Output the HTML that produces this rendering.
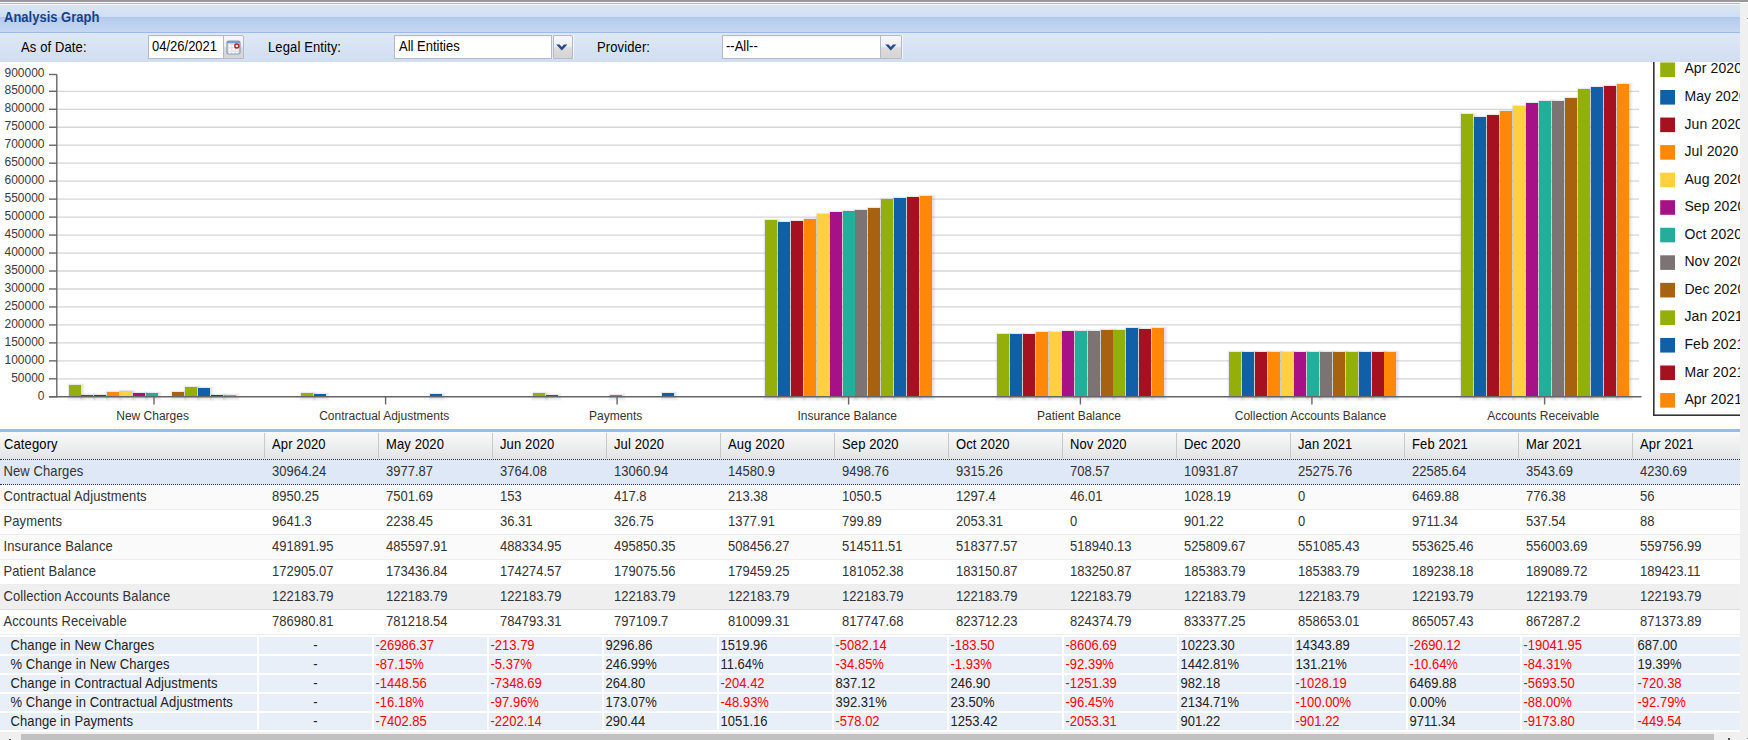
<!DOCTYPE html>
<html><head><meta charset="utf-8">
<style>
html,body{margin:0;padding:0;}
body{width:1748px;height:740px;overflow:hidden;position:relative;background:#fff;font-family:"Liberation Sans",sans-serif;}
.lbl{position:absolute;letter-spacing:0.12px;font-size:13px;line-height:29px;color:#000;white-space:nowrap;transform:scaleY(1.09);transform-origin:0 19px}
.inp{position:absolute;height:24px;box-sizing:border-box;background:#fff;border:1px solid #b5b8c8;font-size:13px;color:#000;white-space:nowrap;overflow:hidden;background-image:linear-gradient(#f3f3f3,#fff 3px)}
.trig{position:absolute;height:24px;box-sizing:border-box;border:1px solid #b5b8c8;border-radius:0 2px 0 0;background:linear-gradient(#f7f7f7 0%,#f0f0f0 45%,#dcdcdc 55%,#d4d4d4 100%)}
.gh{background:linear-gradient(#f9f9f9,#e3e4e6)}
.ht{position:absolute;letter-spacing:0.12px;font-size:13px;line-height:26px;color:#000;white-space:nowrap;transform:scaleY(1.09);transform-origin:0 17.5px}
.ct{position:absolute;font-size:13px;line-height:26px;color:#333;white-space:nowrap;transform:scaleY(1.09);transform-origin:0 17.5px}
.sc{position:absolute;height:17px;background:#e9eff8;font-size:13px;line-height:17px;color:#222;white-space:nowrap}
.t{display:inline-block;transform:scaleY(1.09);transform-origin:0 13px}
</style></head><body>
<svg width="1740" height="430" viewBox="0 0 1740 430" style="position:absolute;left:0;top:0">
<defs><filter id="sh" x="-20%" y="-5%" width="140%" height="110%"><feGaussianBlur in="SourceAlpha" stdDeviation="1"/><feOffset dx="1" dy="1"/><feComponentTransfer><feFuncA type="linear" slope="0.12"/></feComponentTransfer><feMerge><feMergeNode/><feMergeNode in="SourceGraphic"/></feMerge></filter></defs>
<line x1="57" y1="378.83" x2="1639" y2="378.83" stroke="#d6d6d6" stroke-width="1.3"/>
<line x1="57" y1="360.86" x2="1639" y2="360.86" stroke="#d6d6d6" stroke-width="1.3"/>
<line x1="57" y1="342.89" x2="1639" y2="342.89" stroke="#d6d6d6" stroke-width="1.3"/>
<line x1="57" y1="324.92" x2="1639" y2="324.92" stroke="#d6d6d6" stroke-width="1.3"/>
<line x1="57" y1="306.95" x2="1639" y2="306.95" stroke="#d6d6d6" stroke-width="1.3"/>
<line x1="57" y1="288.98" x2="1639" y2="288.98" stroke="#d6d6d6" stroke-width="1.3"/>
<line x1="57" y1="271.01" x2="1639" y2="271.01" stroke="#d6d6d6" stroke-width="1.3"/>
<line x1="57" y1="253.04" x2="1639" y2="253.04" stroke="#d6d6d6" stroke-width="1.3"/>
<line x1="57" y1="235.07" x2="1639" y2="235.07" stroke="#d6d6d6" stroke-width="1.3"/>
<line x1="57" y1="217.10" x2="1639" y2="217.10" stroke="#d6d6d6" stroke-width="1.3"/>
<line x1="57" y1="199.13" x2="1639" y2="199.13" stroke="#d6d6d6" stroke-width="1.3"/>
<line x1="57" y1="181.16" x2="1639" y2="181.16" stroke="#d6d6d6" stroke-width="1.3"/>
<line x1="57" y1="163.19" x2="1639" y2="163.19" stroke="#d6d6d6" stroke-width="1.3"/>
<line x1="57" y1="145.22" x2="1639" y2="145.22" stroke="#d6d6d6" stroke-width="1.3"/>
<line x1="57" y1="127.25" x2="1639" y2="127.25" stroke="#d6d6d6" stroke-width="1.3"/>
<line x1="57" y1="109.28" x2="1639" y2="109.28" stroke="#d6d6d6" stroke-width="1.3"/>
<line x1="57" y1="91.31" x2="1639" y2="91.31" stroke="#d6d6d6" stroke-width="1.3"/>
<line x1="49" y1="396.80" x2="57" y2="396.80" stroke="#666" stroke-width="1.4"/>
<text x="44.5" y="399.80" text-anchor="end" font-family="Liberation Sans" font-size="12" fill="#3a3a3a">0</text>
<line x1="49" y1="378.83" x2="57" y2="378.83" stroke="#666" stroke-width="1.4"/>
<text x="44.5" y="381.83" text-anchor="end" font-family="Liberation Sans" font-size="12" fill="#3a3a3a">50000</text>
<line x1="49" y1="360.86" x2="57" y2="360.86" stroke="#666" stroke-width="1.4"/>
<text x="44.5" y="363.86" text-anchor="end" font-family="Liberation Sans" font-size="12" fill="#3a3a3a">100000</text>
<line x1="49" y1="342.89" x2="57" y2="342.89" stroke="#666" stroke-width="1.4"/>
<text x="44.5" y="345.89" text-anchor="end" font-family="Liberation Sans" font-size="12" fill="#3a3a3a">150000</text>
<line x1="49" y1="324.92" x2="57" y2="324.92" stroke="#666" stroke-width="1.4"/>
<text x="44.5" y="327.92" text-anchor="end" font-family="Liberation Sans" font-size="12" fill="#3a3a3a">200000</text>
<line x1="49" y1="306.95" x2="57" y2="306.95" stroke="#666" stroke-width="1.4"/>
<text x="44.5" y="309.95" text-anchor="end" font-family="Liberation Sans" font-size="12" fill="#3a3a3a">250000</text>
<line x1="49" y1="288.98" x2="57" y2="288.98" stroke="#666" stroke-width="1.4"/>
<text x="44.5" y="291.98" text-anchor="end" font-family="Liberation Sans" font-size="12" fill="#3a3a3a">300000</text>
<line x1="49" y1="271.01" x2="57" y2="271.01" stroke="#666" stroke-width="1.4"/>
<text x="44.5" y="274.01" text-anchor="end" font-family="Liberation Sans" font-size="12" fill="#3a3a3a">350000</text>
<line x1="49" y1="253.04" x2="57" y2="253.04" stroke="#666" stroke-width="1.4"/>
<text x="44.5" y="256.04" text-anchor="end" font-family="Liberation Sans" font-size="12" fill="#3a3a3a">400000</text>
<line x1="49" y1="235.07" x2="57" y2="235.07" stroke="#666" stroke-width="1.4"/>
<text x="44.5" y="238.07" text-anchor="end" font-family="Liberation Sans" font-size="12" fill="#3a3a3a">450000</text>
<line x1="49" y1="217.10" x2="57" y2="217.10" stroke="#666" stroke-width="1.4"/>
<text x="44.5" y="220.10" text-anchor="end" font-family="Liberation Sans" font-size="12" fill="#3a3a3a">500000</text>
<line x1="49" y1="199.13" x2="57" y2="199.13" stroke="#666" stroke-width="1.4"/>
<text x="44.5" y="202.13" text-anchor="end" font-family="Liberation Sans" font-size="12" fill="#3a3a3a">550000</text>
<line x1="49" y1="181.16" x2="57" y2="181.16" stroke="#666" stroke-width="1.4"/>
<text x="44.5" y="184.16" text-anchor="end" font-family="Liberation Sans" font-size="12" fill="#3a3a3a">600000</text>
<line x1="49" y1="163.19" x2="57" y2="163.19" stroke="#666" stroke-width="1.4"/>
<text x="44.5" y="166.19" text-anchor="end" font-family="Liberation Sans" font-size="12" fill="#3a3a3a">650000</text>
<line x1="49" y1="145.22" x2="57" y2="145.22" stroke="#666" stroke-width="1.4"/>
<text x="44.5" y="148.22" text-anchor="end" font-family="Liberation Sans" font-size="12" fill="#3a3a3a">700000</text>
<line x1="49" y1="127.25" x2="57" y2="127.25" stroke="#666" stroke-width="1.4"/>
<text x="44.5" y="130.25" text-anchor="end" font-family="Liberation Sans" font-size="12" fill="#3a3a3a">750000</text>
<line x1="49" y1="109.28" x2="57" y2="109.28" stroke="#666" stroke-width="1.4"/>
<text x="44.5" y="112.28" text-anchor="end" font-family="Liberation Sans" font-size="12" fill="#3a3a3a">800000</text>
<line x1="49" y1="91.31" x2="57" y2="91.31" stroke="#666" stroke-width="1.4"/>
<text x="44.5" y="94.31" text-anchor="end" font-family="Liberation Sans" font-size="12" fill="#3a3a3a">850000</text>
<line x1="49" y1="74.50" x2="57" y2="74.50" stroke="#666" stroke-width="1.4"/>
<text x="44.5" y="76.50" text-anchor="end" font-family="Liberation Sans" font-size="12" fill="#3a3a3a">900000</text>
<g><rect x="70.20" y="386.20" width="12.0" height="11.80" fill="none" stroke="rgb(200,200,200)" stroke-width="6" stroke-opacity="0.10"/><rect x="69.90" y="385.90" width="12.0" height="11.80" fill="none" stroke="rgb(150,150,150)" stroke-width="4" stroke-opacity="0.10"/><rect x="69.60" y="385.60" width="12.0" height="11.80" fill="none" stroke="rgb(100,100,100)" stroke-width="2" stroke-opacity="0.10"/><rect x="82.20" y="396.20" width="12.0" height="1.80" fill="none" stroke="rgb(200,200,200)" stroke-width="6" stroke-opacity="0.10"/><rect x="81.90" y="395.90" width="12.0" height="1.80" fill="none" stroke="rgb(150,150,150)" stroke-width="4" stroke-opacity="0.10"/><rect x="81.60" y="395.60" width="12.0" height="1.80" fill="none" stroke="rgb(100,100,100)" stroke-width="2" stroke-opacity="0.10"/><rect x="95.20" y="396.20" width="12.0" height="1.80" fill="none" stroke="rgb(200,200,200)" stroke-width="6" stroke-opacity="0.10"/><rect x="94.90" y="395.90" width="12.0" height="1.80" fill="none" stroke="rgb(150,150,150)" stroke-width="4" stroke-opacity="0.10"/><rect x="94.60" y="395.60" width="12.0" height="1.80" fill="none" stroke="rgb(100,100,100)" stroke-width="2" stroke-opacity="0.10"/><rect x="108.20" y="393.20" width="12.0" height="4.80" fill="none" stroke="rgb(200,200,200)" stroke-width="6" stroke-opacity="0.10"/><rect x="107.90" y="392.90" width="12.0" height="4.80" fill="none" stroke="rgb(150,150,150)" stroke-width="4" stroke-opacity="0.10"/><rect x="107.60" y="392.60" width="12.0" height="4.80" fill="none" stroke="rgb(100,100,100)" stroke-width="2" stroke-opacity="0.10"/><rect x="121.20" y="392.20" width="12.0" height="5.80" fill="none" stroke="rgb(200,200,200)" stroke-width="6" stroke-opacity="0.10"/><rect x="120.90" y="391.90" width="12.0" height="5.80" fill="none" stroke="rgb(150,150,150)" stroke-width="4" stroke-opacity="0.10"/><rect x="120.60" y="391.60" width="12.0" height="5.80" fill="none" stroke="rgb(100,100,100)" stroke-width="2" stroke-opacity="0.10"/><rect x="134.20" y="394.20" width="12.0" height="3.80" fill="none" stroke="rgb(200,200,200)" stroke-width="6" stroke-opacity="0.10"/><rect x="133.90" y="393.90" width="12.0" height="3.80" fill="none" stroke="rgb(150,150,150)" stroke-width="4" stroke-opacity="0.10"/><rect x="133.60" y="393.60" width="12.0" height="3.80" fill="none" stroke="rgb(100,100,100)" stroke-width="2" stroke-opacity="0.10"/><rect x="147.20" y="394.20" width="12.0" height="3.80" fill="none" stroke="rgb(200,200,200)" stroke-width="6" stroke-opacity="0.10"/><rect x="146.90" y="393.90" width="12.0" height="3.80" fill="none" stroke="rgb(150,150,150)" stroke-width="4" stroke-opacity="0.10"/><rect x="146.60" y="393.60" width="12.0" height="3.80" fill="none" stroke="rgb(100,100,100)" stroke-width="2" stroke-opacity="0.10"/><rect x="173.20" y="393.20" width="12.0" height="4.80" fill="none" stroke="rgb(200,200,200)" stroke-width="6" stroke-opacity="0.10"/><rect x="172.90" y="392.90" width="12.0" height="4.80" fill="none" stroke="rgb(150,150,150)" stroke-width="4" stroke-opacity="0.10"/><rect x="172.60" y="392.60" width="12.0" height="4.80" fill="none" stroke="rgb(100,100,100)" stroke-width="2" stroke-opacity="0.10"/><rect x="186.20" y="388.20" width="12.0" height="9.80" fill="none" stroke="rgb(200,200,200)" stroke-width="6" stroke-opacity="0.10"/><rect x="185.90" y="387.90" width="12.0" height="9.80" fill="none" stroke="rgb(150,150,150)" stroke-width="4" stroke-opacity="0.10"/><rect x="185.60" y="387.60" width="12.0" height="9.80" fill="none" stroke="rgb(100,100,100)" stroke-width="2" stroke-opacity="0.10"/><rect x="199.20" y="389.20" width="12.0" height="8.80" fill="none" stroke="rgb(200,200,200)" stroke-width="6" stroke-opacity="0.10"/><rect x="198.90" y="388.90" width="12.0" height="8.80" fill="none" stroke="rgb(150,150,150)" stroke-width="4" stroke-opacity="0.10"/><rect x="198.60" y="388.60" width="12.0" height="8.80" fill="none" stroke="rgb(100,100,100)" stroke-width="2" stroke-opacity="0.10"/><rect x="212.20" y="396.20" width="12.0" height="1.80" fill="none" stroke="rgb(200,200,200)" stroke-width="6" stroke-opacity="0.10"/><rect x="211.90" y="395.90" width="12.0" height="1.80" fill="none" stroke="rgb(150,150,150)" stroke-width="4" stroke-opacity="0.10"/><rect x="211.60" y="395.60" width="12.0" height="1.80" fill="none" stroke="rgb(100,100,100)" stroke-width="2" stroke-opacity="0.10"/><rect x="225.20" y="396.20" width="12.0" height="1.80" fill="none" stroke="rgb(200,200,200)" stroke-width="6" stroke-opacity="0.10"/><rect x="224.90" y="395.90" width="12.0" height="1.80" fill="none" stroke="rgb(150,150,150)" stroke-width="4" stroke-opacity="0.10"/><rect x="224.60" y="395.60" width="12.0" height="1.80" fill="none" stroke="rgb(100,100,100)" stroke-width="2" stroke-opacity="0.10"/></g>
<g><rect x="69.00" y="385.00" width="12.0" height="11.80" fill="#94ae0a"/><rect x="81.00" y="395.00" width="12.0" height="1.80" fill="#115fa6"/><rect x="94.00" y="395.00" width="12.0" height="1.80" fill="#a61120"/><rect x="107.00" y="392.00" width="12.0" height="4.80" fill="#ff8809"/><rect x="120.00" y="391.00" width="12.0" height="5.80" fill="#ffd13e"/><rect x="133.00" y="393.00" width="12.0" height="3.80" fill="#a61187"/><rect x="146.00" y="393.00" width="12.0" height="3.80" fill="#24ad9a"/><rect x="172.00" y="392.00" width="12.0" height="4.80" fill="#a66111"/><rect x="185.00" y="387.00" width="12.0" height="9.80" fill="#94ae0a"/><rect x="198.00" y="388.00" width="12.0" height="8.80" fill="#115fa6"/><rect x="211.00" y="395.00" width="12.0" height="1.80" fill="#a61120"/><rect x="224.00" y="395.00" width="12.0" height="1.80" fill="#ff8809"/></g>
<line x1="154.00" y1="396.8" x2="154.00" y2="404.5" stroke="#666" stroke-width="1.4"/>
<text x="152.60" y="420" text-anchor="middle" font-family="Liberation Sans" font-size="12" fill="#333">New Charges</text>
<g><rect x="302.20" y="394.20" width="12.0" height="3.80" fill="none" stroke="rgb(200,200,200)" stroke-width="6" stroke-opacity="0.10"/><rect x="301.90" y="393.90" width="12.0" height="3.80" fill="none" stroke="rgb(150,150,150)" stroke-width="4" stroke-opacity="0.10"/><rect x="301.60" y="393.60" width="12.0" height="3.80" fill="none" stroke="rgb(100,100,100)" stroke-width="2" stroke-opacity="0.10"/><rect x="315.20" y="395.20" width="12.0" height="2.80" fill="none" stroke="rgb(200,200,200)" stroke-width="6" stroke-opacity="0.10"/><rect x="314.90" y="394.90" width="12.0" height="2.80" fill="none" stroke="rgb(150,150,150)" stroke-width="4" stroke-opacity="0.10"/><rect x="314.60" y="394.60" width="12.0" height="2.80" fill="none" stroke="rgb(100,100,100)" stroke-width="2" stroke-opacity="0.10"/><rect x="431.20" y="395.20" width="12.0" height="2.80" fill="none" stroke="rgb(200,200,200)" stroke-width="6" stroke-opacity="0.10"/><rect x="430.90" y="394.90" width="12.0" height="2.80" fill="none" stroke="rgb(150,150,150)" stroke-width="4" stroke-opacity="0.10"/><rect x="430.60" y="394.60" width="12.0" height="2.80" fill="none" stroke="rgb(100,100,100)" stroke-width="2" stroke-opacity="0.10"/></g>
<g><rect x="301.00" y="393.00" width="12.0" height="3.80" fill="#94ae0a"/><rect x="314.00" y="394.00" width="12.0" height="2.80" fill="#115fa6"/><rect x="430.00" y="394.00" width="12.0" height="2.80" fill="#115fa6"/></g>
<line x1="385.60" y1="396.8" x2="385.60" y2="404.5" stroke="#666" stroke-width="1.4"/>
<text x="384.20" y="420" text-anchor="middle" font-family="Liberation Sans" font-size="12" fill="#333">Contractual Adjustments</text>
<g><rect x="534.20" y="394.20" width="12.0" height="3.80" fill="none" stroke="rgb(200,200,200)" stroke-width="6" stroke-opacity="0.10"/><rect x="533.90" y="393.90" width="12.0" height="3.80" fill="none" stroke="rgb(150,150,150)" stroke-width="4" stroke-opacity="0.10"/><rect x="533.60" y="393.60" width="12.0" height="3.80" fill="none" stroke="rgb(100,100,100)" stroke-width="2" stroke-opacity="0.10"/><rect x="547.20" y="396.20" width="12.0" height="1.80" fill="none" stroke="rgb(200,200,200)" stroke-width="6" stroke-opacity="0.10"/><rect x="546.90" y="395.90" width="12.0" height="1.80" fill="none" stroke="rgb(150,150,150)" stroke-width="4" stroke-opacity="0.10"/><rect x="546.60" y="395.60" width="12.0" height="1.80" fill="none" stroke="rgb(100,100,100)" stroke-width="2" stroke-opacity="0.10"/><rect x="611.20" y="396.20" width="12.0" height="1.80" fill="none" stroke="rgb(200,200,200)" stroke-width="6" stroke-opacity="0.10"/><rect x="610.90" y="395.90" width="12.0" height="1.80" fill="none" stroke="rgb(150,150,150)" stroke-width="4" stroke-opacity="0.10"/><rect x="610.60" y="395.60" width="12.0" height="1.80" fill="none" stroke="rgb(100,100,100)" stroke-width="2" stroke-opacity="0.10"/><rect x="663.20" y="394.20" width="12.0" height="3.80" fill="none" stroke="rgb(200,200,200)" stroke-width="6" stroke-opacity="0.10"/><rect x="662.90" y="393.90" width="12.0" height="3.80" fill="none" stroke="rgb(150,150,150)" stroke-width="4" stroke-opacity="0.10"/><rect x="662.60" y="393.60" width="12.0" height="3.80" fill="none" stroke="rgb(100,100,100)" stroke-width="2" stroke-opacity="0.10"/></g>
<g><rect x="533.00" y="393.00" width="12.0" height="3.80" fill="#94ae0a"/><rect x="546.00" y="395.00" width="12.0" height="1.80" fill="#115fa6"/><rect x="610.00" y="395.00" width="12.0" height="1.80" fill="#24ad9a"/><rect x="662.00" y="393.00" width="12.0" height="3.80" fill="#115fa6"/></g>
<line x1="617.10" y1="396.8" x2="617.10" y2="404.5" stroke="#666" stroke-width="1.4"/>
<text x="615.70" y="420" text-anchor="middle" font-family="Liberation Sans" font-size="12" fill="#333">Payments</text>
<g><rect x="766.20" y="221.20" width="12.0" height="176.80" fill="none" stroke="rgb(200,200,200)" stroke-width="6" stroke-opacity="0.10"/><rect x="765.90" y="220.90" width="12.0" height="176.80" fill="none" stroke="rgb(150,150,150)" stroke-width="4" stroke-opacity="0.10"/><rect x="765.60" y="220.60" width="12.0" height="176.80" fill="none" stroke="rgb(100,100,100)" stroke-width="2" stroke-opacity="0.10"/><rect x="779.20" y="223.20" width="12.0" height="174.80" fill="none" stroke="rgb(200,200,200)" stroke-width="6" stroke-opacity="0.10"/><rect x="778.90" y="222.90" width="12.0" height="174.80" fill="none" stroke="rgb(150,150,150)" stroke-width="4" stroke-opacity="0.10"/><rect x="778.60" y="222.60" width="12.0" height="174.80" fill="none" stroke="rgb(100,100,100)" stroke-width="2" stroke-opacity="0.10"/><rect x="792.20" y="222.20" width="12.0" height="175.80" fill="none" stroke="rgb(200,200,200)" stroke-width="6" stroke-opacity="0.10"/><rect x="791.90" y="221.90" width="12.0" height="175.80" fill="none" stroke="rgb(150,150,150)" stroke-width="4" stroke-opacity="0.10"/><rect x="791.60" y="221.60" width="12.0" height="175.80" fill="none" stroke="rgb(100,100,100)" stroke-width="2" stroke-opacity="0.10"/><rect x="805.20" y="220.20" width="12.0" height="177.80" fill="none" stroke="rgb(200,200,200)" stroke-width="6" stroke-opacity="0.10"/><rect x="804.90" y="219.90" width="12.0" height="177.80" fill="none" stroke="rgb(150,150,150)" stroke-width="4" stroke-opacity="0.10"/><rect x="804.60" y="219.60" width="12.0" height="177.80" fill="none" stroke="rgb(100,100,100)" stroke-width="2" stroke-opacity="0.10"/><rect x="818.20" y="215.20" width="12.0" height="182.80" fill="none" stroke="rgb(200,200,200)" stroke-width="6" stroke-opacity="0.10"/><rect x="817.90" y="214.90" width="12.0" height="182.80" fill="none" stroke="rgb(150,150,150)" stroke-width="4" stroke-opacity="0.10"/><rect x="817.60" y="214.60" width="12.0" height="182.80" fill="none" stroke="rgb(100,100,100)" stroke-width="2" stroke-opacity="0.10"/><rect x="831.20" y="213.20" width="12.0" height="184.80" fill="none" stroke="rgb(200,200,200)" stroke-width="6" stroke-opacity="0.10"/><rect x="830.90" y="212.90" width="12.0" height="184.80" fill="none" stroke="rgb(150,150,150)" stroke-width="4" stroke-opacity="0.10"/><rect x="830.60" y="212.60" width="12.0" height="184.80" fill="none" stroke="rgb(100,100,100)" stroke-width="2" stroke-opacity="0.10"/><rect x="844.20" y="212.20" width="12.0" height="185.80" fill="none" stroke="rgb(200,200,200)" stroke-width="6" stroke-opacity="0.10"/><rect x="843.90" y="211.90" width="12.0" height="185.80" fill="none" stroke="rgb(150,150,150)" stroke-width="4" stroke-opacity="0.10"/><rect x="843.60" y="211.60" width="12.0" height="185.80" fill="none" stroke="rgb(100,100,100)" stroke-width="2" stroke-opacity="0.10"/><rect x="856.20" y="211.20" width="12.0" height="186.80" fill="none" stroke="rgb(200,200,200)" stroke-width="6" stroke-opacity="0.10"/><rect x="855.90" y="210.90" width="12.0" height="186.80" fill="none" stroke="rgb(150,150,150)" stroke-width="4" stroke-opacity="0.10"/><rect x="855.60" y="210.60" width="12.0" height="186.80" fill="none" stroke="rgb(100,100,100)" stroke-width="2" stroke-opacity="0.10"/><rect x="869.20" y="209.20" width="12.0" height="188.80" fill="none" stroke="rgb(200,200,200)" stroke-width="6" stroke-opacity="0.10"/><rect x="868.90" y="208.90" width="12.0" height="188.80" fill="none" stroke="rgb(150,150,150)" stroke-width="4" stroke-opacity="0.10"/><rect x="868.60" y="208.60" width="12.0" height="188.80" fill="none" stroke="rgb(100,100,100)" stroke-width="2" stroke-opacity="0.10"/><rect x="882.20" y="200.20" width="12.0" height="197.80" fill="none" stroke="rgb(200,200,200)" stroke-width="6" stroke-opacity="0.10"/><rect x="881.90" y="199.90" width="12.0" height="197.80" fill="none" stroke="rgb(150,150,150)" stroke-width="4" stroke-opacity="0.10"/><rect x="881.60" y="199.60" width="12.0" height="197.80" fill="none" stroke="rgb(100,100,100)" stroke-width="2" stroke-opacity="0.10"/><rect x="895.20" y="199.20" width="12.0" height="198.80" fill="none" stroke="rgb(200,200,200)" stroke-width="6" stroke-opacity="0.10"/><rect x="894.90" y="198.90" width="12.0" height="198.80" fill="none" stroke="rgb(150,150,150)" stroke-width="4" stroke-opacity="0.10"/><rect x="894.60" y="198.60" width="12.0" height="198.80" fill="none" stroke="rgb(100,100,100)" stroke-width="2" stroke-opacity="0.10"/><rect x="908.20" y="198.20" width="12.0" height="199.80" fill="none" stroke="rgb(200,200,200)" stroke-width="6" stroke-opacity="0.10"/><rect x="907.90" y="197.90" width="12.0" height="199.80" fill="none" stroke="rgb(150,150,150)" stroke-width="4" stroke-opacity="0.10"/><rect x="907.60" y="197.60" width="12.0" height="199.80" fill="none" stroke="rgb(100,100,100)" stroke-width="2" stroke-opacity="0.10"/><rect x="921.20" y="197.20" width="12.0" height="200.80" fill="none" stroke="rgb(200,200,200)" stroke-width="6" stroke-opacity="0.10"/><rect x="920.90" y="196.90" width="12.0" height="200.80" fill="none" stroke="rgb(150,150,150)" stroke-width="4" stroke-opacity="0.10"/><rect x="920.60" y="196.60" width="12.0" height="200.80" fill="none" stroke="rgb(100,100,100)" stroke-width="2" stroke-opacity="0.10"/></g>
<g><rect x="765.00" y="220.00" width="12.0" height="176.80" fill="#94ae0a"/><rect x="778.00" y="222.00" width="12.0" height="174.80" fill="#115fa6"/><rect x="791.00" y="221.00" width="12.0" height="175.80" fill="#a61120"/><rect x="804.00" y="219.00" width="12.0" height="177.80" fill="#ff8809"/><rect x="817.00" y="214.00" width="12.0" height="182.80" fill="#ffd13e"/><rect x="830.00" y="212.00" width="12.0" height="184.80" fill="#a61187"/><rect x="843.00" y="211.00" width="12.0" height="185.80" fill="#24ad9a"/><rect x="855.00" y="210.00" width="12.0" height="186.80" fill="#7c7474"/><rect x="868.00" y="208.00" width="12.0" height="188.80" fill="#a66111"/><rect x="881.00" y="199.00" width="12.0" height="197.80" fill="#94ae0a"/><rect x="894.00" y="198.00" width="12.0" height="198.80" fill="#115fa6"/><rect x="907.00" y="197.00" width="12.0" height="199.80" fill="#a61120"/><rect x="920.00" y="196.00" width="12.0" height="200.80" fill="#ff8809"/></g>
<line x1="848.60" y1="396.8" x2="848.60" y2="404.5" stroke="#666" stroke-width="1.4"/>
<text x="847.20" y="420" text-anchor="middle" font-family="Liberation Sans" font-size="12" fill="#333">Insurance Balance</text>
<g><rect x="998.20" y="335.20" width="12.0" height="62.80" fill="none" stroke="rgb(200,200,200)" stroke-width="6" stroke-opacity="0.10"/><rect x="997.90" y="334.90" width="12.0" height="62.80" fill="none" stroke="rgb(150,150,150)" stroke-width="4" stroke-opacity="0.10"/><rect x="997.60" y="334.60" width="12.0" height="62.80" fill="none" stroke="rgb(100,100,100)" stroke-width="2" stroke-opacity="0.10"/><rect x="1011.20" y="335.20" width="12.0" height="62.80" fill="none" stroke="rgb(200,200,200)" stroke-width="6" stroke-opacity="0.10"/><rect x="1010.90" y="334.90" width="12.0" height="62.80" fill="none" stroke="rgb(150,150,150)" stroke-width="4" stroke-opacity="0.10"/><rect x="1010.60" y="334.60" width="12.0" height="62.80" fill="none" stroke="rgb(100,100,100)" stroke-width="2" stroke-opacity="0.10"/><rect x="1024.20" y="335.20" width="12.0" height="62.80" fill="none" stroke="rgb(200,200,200)" stroke-width="6" stroke-opacity="0.10"/><rect x="1023.90" y="334.90" width="12.0" height="62.80" fill="none" stroke="rgb(150,150,150)" stroke-width="4" stroke-opacity="0.10"/><rect x="1023.60" y="334.60" width="12.0" height="62.80" fill="none" stroke="rgb(100,100,100)" stroke-width="2" stroke-opacity="0.10"/><rect x="1037.20" y="333.20" width="12.0" height="64.80" fill="none" stroke="rgb(200,200,200)" stroke-width="6" stroke-opacity="0.10"/><rect x="1036.90" y="332.90" width="12.0" height="64.80" fill="none" stroke="rgb(150,150,150)" stroke-width="4" stroke-opacity="0.10"/><rect x="1036.60" y="332.60" width="12.0" height="64.80" fill="none" stroke="rgb(100,100,100)" stroke-width="2" stroke-opacity="0.10"/><rect x="1050.20" y="333.20" width="12.0" height="64.80" fill="none" stroke="rgb(200,200,200)" stroke-width="6" stroke-opacity="0.10"/><rect x="1049.90" y="332.90" width="12.0" height="64.80" fill="none" stroke="rgb(150,150,150)" stroke-width="4" stroke-opacity="0.10"/><rect x="1049.60" y="332.60" width="12.0" height="64.80" fill="none" stroke="rgb(100,100,100)" stroke-width="2" stroke-opacity="0.10"/><rect x="1063.20" y="332.20" width="12.0" height="65.80" fill="none" stroke="rgb(200,200,200)" stroke-width="6" stroke-opacity="0.10"/><rect x="1062.90" y="331.90" width="12.0" height="65.80" fill="none" stroke="rgb(150,150,150)" stroke-width="4" stroke-opacity="0.10"/><rect x="1062.60" y="331.60" width="12.0" height="65.80" fill="none" stroke="rgb(100,100,100)" stroke-width="2" stroke-opacity="0.10"/><rect x="1076.20" y="332.20" width="12.0" height="65.80" fill="none" stroke="rgb(200,200,200)" stroke-width="6" stroke-opacity="0.10"/><rect x="1075.90" y="331.90" width="12.0" height="65.80" fill="none" stroke="rgb(150,150,150)" stroke-width="4" stroke-opacity="0.10"/><rect x="1075.60" y="331.60" width="12.0" height="65.80" fill="none" stroke="rgb(100,100,100)" stroke-width="2" stroke-opacity="0.10"/><rect x="1089.20" y="332.20" width="12.0" height="65.80" fill="none" stroke="rgb(200,200,200)" stroke-width="6" stroke-opacity="0.10"/><rect x="1088.90" y="331.90" width="12.0" height="65.80" fill="none" stroke="rgb(150,150,150)" stroke-width="4" stroke-opacity="0.10"/><rect x="1088.60" y="331.60" width="12.0" height="65.80" fill="none" stroke="rgb(100,100,100)" stroke-width="2" stroke-opacity="0.10"/><rect x="1102.20" y="331.20" width="12.0" height="66.80" fill="none" stroke="rgb(200,200,200)" stroke-width="6" stroke-opacity="0.10"/><rect x="1101.90" y="330.90" width="12.0" height="66.80" fill="none" stroke="rgb(150,150,150)" stroke-width="4" stroke-opacity="0.10"/><rect x="1101.60" y="330.60" width="12.0" height="66.80" fill="none" stroke="rgb(100,100,100)" stroke-width="2" stroke-opacity="0.10"/><rect x="1114.20" y="331.20" width="12.0" height="66.80" fill="none" stroke="rgb(200,200,200)" stroke-width="6" stroke-opacity="0.10"/><rect x="1113.90" y="330.90" width="12.0" height="66.80" fill="none" stroke="rgb(150,150,150)" stroke-width="4" stroke-opacity="0.10"/><rect x="1113.60" y="330.60" width="12.0" height="66.80" fill="none" stroke="rgb(100,100,100)" stroke-width="2" stroke-opacity="0.10"/><rect x="1127.20" y="329.20" width="12.0" height="68.80" fill="none" stroke="rgb(200,200,200)" stroke-width="6" stroke-opacity="0.10"/><rect x="1126.90" y="328.90" width="12.0" height="68.80" fill="none" stroke="rgb(150,150,150)" stroke-width="4" stroke-opacity="0.10"/><rect x="1126.60" y="328.60" width="12.0" height="68.80" fill="none" stroke="rgb(100,100,100)" stroke-width="2" stroke-opacity="0.10"/><rect x="1140.20" y="330.20" width="12.0" height="67.80" fill="none" stroke="rgb(200,200,200)" stroke-width="6" stroke-opacity="0.10"/><rect x="1139.90" y="329.90" width="12.0" height="67.80" fill="none" stroke="rgb(150,150,150)" stroke-width="4" stroke-opacity="0.10"/><rect x="1139.60" y="329.60" width="12.0" height="67.80" fill="none" stroke="rgb(100,100,100)" stroke-width="2" stroke-opacity="0.10"/><rect x="1153.20" y="329.20" width="12.0" height="68.80" fill="none" stroke="rgb(200,200,200)" stroke-width="6" stroke-opacity="0.10"/><rect x="1152.90" y="328.90" width="12.0" height="68.80" fill="none" stroke="rgb(150,150,150)" stroke-width="4" stroke-opacity="0.10"/><rect x="1152.60" y="328.60" width="12.0" height="68.80" fill="none" stroke="rgb(100,100,100)" stroke-width="2" stroke-opacity="0.10"/></g>
<g><rect x="997.00" y="334.00" width="12.0" height="62.80" fill="#94ae0a"/><rect x="1010.00" y="334.00" width="12.0" height="62.80" fill="#115fa6"/><rect x="1023.00" y="334.00" width="12.0" height="62.80" fill="#a61120"/><rect x="1036.00" y="332.00" width="12.0" height="64.80" fill="#ff8809"/><rect x="1049.00" y="332.00" width="12.0" height="64.80" fill="#ffd13e"/><rect x="1062.00" y="331.00" width="12.0" height="65.80" fill="#a61187"/><rect x="1075.00" y="331.00" width="12.0" height="65.80" fill="#24ad9a"/><rect x="1088.00" y="331.00" width="12.0" height="65.80" fill="#7c7474"/><rect x="1101.00" y="330.00" width="12.0" height="66.80" fill="#a66111"/><rect x="1113.00" y="330.00" width="12.0" height="66.80" fill="#94ae0a"/><rect x="1126.00" y="328.00" width="12.0" height="68.80" fill="#115fa6"/><rect x="1139.00" y="329.00" width="12.0" height="67.80" fill="#a61120"/><rect x="1152.00" y="328.00" width="12.0" height="68.80" fill="#ff8809"/></g>
<line x1="1080.40" y1="396.8" x2="1080.40" y2="404.5" stroke="#666" stroke-width="1.4"/>
<text x="1079.00" y="420" text-anchor="middle" font-family="Liberation Sans" font-size="12" fill="#333">Patient Balance</text>
<g><rect x="1230.20" y="353.20" width="12.0" height="44.80" fill="none" stroke="rgb(200,200,200)" stroke-width="6" stroke-opacity="0.10"/><rect x="1229.90" y="352.90" width="12.0" height="44.80" fill="none" stroke="rgb(150,150,150)" stroke-width="4" stroke-opacity="0.10"/><rect x="1229.60" y="352.60" width="12.0" height="44.80" fill="none" stroke="rgb(100,100,100)" stroke-width="2" stroke-opacity="0.10"/><rect x="1243.20" y="353.20" width="12.0" height="44.80" fill="none" stroke="rgb(200,200,200)" stroke-width="6" stroke-opacity="0.10"/><rect x="1242.90" y="352.90" width="12.0" height="44.80" fill="none" stroke="rgb(150,150,150)" stroke-width="4" stroke-opacity="0.10"/><rect x="1242.60" y="352.60" width="12.0" height="44.80" fill="none" stroke="rgb(100,100,100)" stroke-width="2" stroke-opacity="0.10"/><rect x="1256.20" y="353.20" width="12.0" height="44.80" fill="none" stroke="rgb(200,200,200)" stroke-width="6" stroke-opacity="0.10"/><rect x="1255.90" y="352.90" width="12.0" height="44.80" fill="none" stroke="rgb(150,150,150)" stroke-width="4" stroke-opacity="0.10"/><rect x="1255.60" y="352.60" width="12.0" height="44.80" fill="none" stroke="rgb(100,100,100)" stroke-width="2" stroke-opacity="0.10"/><rect x="1269.20" y="353.20" width="12.0" height="44.80" fill="none" stroke="rgb(200,200,200)" stroke-width="6" stroke-opacity="0.10"/><rect x="1268.90" y="352.90" width="12.0" height="44.80" fill="none" stroke="rgb(150,150,150)" stroke-width="4" stroke-opacity="0.10"/><rect x="1268.60" y="352.60" width="12.0" height="44.80" fill="none" stroke="rgb(100,100,100)" stroke-width="2" stroke-opacity="0.10"/><rect x="1282.20" y="353.20" width="12.0" height="44.80" fill="none" stroke="rgb(200,200,200)" stroke-width="6" stroke-opacity="0.10"/><rect x="1281.90" y="352.90" width="12.0" height="44.80" fill="none" stroke="rgb(150,150,150)" stroke-width="4" stroke-opacity="0.10"/><rect x="1281.60" y="352.60" width="12.0" height="44.80" fill="none" stroke="rgb(100,100,100)" stroke-width="2" stroke-opacity="0.10"/><rect x="1295.20" y="353.20" width="12.0" height="44.80" fill="none" stroke="rgb(200,200,200)" stroke-width="6" stroke-opacity="0.10"/><rect x="1294.90" y="352.90" width="12.0" height="44.80" fill="none" stroke="rgb(150,150,150)" stroke-width="4" stroke-opacity="0.10"/><rect x="1294.60" y="352.60" width="12.0" height="44.80" fill="none" stroke="rgb(100,100,100)" stroke-width="2" stroke-opacity="0.10"/><rect x="1308.20" y="353.20" width="12.0" height="44.80" fill="none" stroke="rgb(200,200,200)" stroke-width="6" stroke-opacity="0.10"/><rect x="1307.90" y="352.90" width="12.0" height="44.80" fill="none" stroke="rgb(150,150,150)" stroke-width="4" stroke-opacity="0.10"/><rect x="1307.60" y="352.60" width="12.0" height="44.80" fill="none" stroke="rgb(100,100,100)" stroke-width="2" stroke-opacity="0.10"/><rect x="1321.20" y="353.20" width="12.0" height="44.80" fill="none" stroke="rgb(200,200,200)" stroke-width="6" stroke-opacity="0.10"/><rect x="1320.90" y="352.90" width="12.0" height="44.80" fill="none" stroke="rgb(150,150,150)" stroke-width="4" stroke-opacity="0.10"/><rect x="1320.60" y="352.60" width="12.0" height="44.80" fill="none" stroke="rgb(100,100,100)" stroke-width="2" stroke-opacity="0.10"/><rect x="1334.20" y="353.20" width="12.0" height="44.80" fill="none" stroke="rgb(200,200,200)" stroke-width="6" stroke-opacity="0.10"/><rect x="1333.90" y="352.90" width="12.0" height="44.80" fill="none" stroke="rgb(150,150,150)" stroke-width="4" stroke-opacity="0.10"/><rect x="1333.60" y="352.60" width="12.0" height="44.80" fill="none" stroke="rgb(100,100,100)" stroke-width="2" stroke-opacity="0.10"/><rect x="1347.20" y="353.20" width="12.0" height="44.80" fill="none" stroke="rgb(200,200,200)" stroke-width="6" stroke-opacity="0.10"/><rect x="1346.90" y="352.90" width="12.0" height="44.80" fill="none" stroke="rgb(150,150,150)" stroke-width="4" stroke-opacity="0.10"/><rect x="1346.60" y="352.60" width="12.0" height="44.80" fill="none" stroke="rgb(100,100,100)" stroke-width="2" stroke-opacity="0.10"/><rect x="1360.20" y="353.20" width="12.0" height="44.80" fill="none" stroke="rgb(200,200,200)" stroke-width="6" stroke-opacity="0.10"/><rect x="1359.90" y="352.90" width="12.0" height="44.80" fill="none" stroke="rgb(150,150,150)" stroke-width="4" stroke-opacity="0.10"/><rect x="1359.60" y="352.60" width="12.0" height="44.80" fill="none" stroke="rgb(100,100,100)" stroke-width="2" stroke-opacity="0.10"/><rect x="1373.20" y="353.20" width="12.0" height="44.80" fill="none" stroke="rgb(200,200,200)" stroke-width="6" stroke-opacity="0.10"/><rect x="1372.90" y="352.90" width="12.0" height="44.80" fill="none" stroke="rgb(150,150,150)" stroke-width="4" stroke-opacity="0.10"/><rect x="1372.60" y="352.60" width="12.0" height="44.80" fill="none" stroke="rgb(100,100,100)" stroke-width="2" stroke-opacity="0.10"/><rect x="1385.20" y="353.20" width="12.0" height="44.80" fill="none" stroke="rgb(200,200,200)" stroke-width="6" stroke-opacity="0.10"/><rect x="1384.90" y="352.90" width="12.0" height="44.80" fill="none" stroke="rgb(150,150,150)" stroke-width="4" stroke-opacity="0.10"/><rect x="1384.60" y="352.60" width="12.0" height="44.80" fill="none" stroke="rgb(100,100,100)" stroke-width="2" stroke-opacity="0.10"/></g>
<g><rect x="1229.00" y="352.00" width="12.0" height="44.80" fill="#94ae0a"/><rect x="1242.00" y="352.00" width="12.0" height="44.80" fill="#115fa6"/><rect x="1255.00" y="352.00" width="12.0" height="44.80" fill="#a61120"/><rect x="1268.00" y="352.00" width="12.0" height="44.80" fill="#ff8809"/><rect x="1281.00" y="352.00" width="12.0" height="44.80" fill="#ffd13e"/><rect x="1294.00" y="352.00" width="12.0" height="44.80" fill="#a61187"/><rect x="1307.00" y="352.00" width="12.0" height="44.80" fill="#24ad9a"/><rect x="1320.00" y="352.00" width="12.0" height="44.80" fill="#7c7474"/><rect x="1333.00" y="352.00" width="12.0" height="44.80" fill="#a66111"/><rect x="1346.00" y="352.00" width="12.0" height="44.80" fill="#94ae0a"/><rect x="1359.00" y="352.00" width="12.0" height="44.80" fill="#115fa6"/><rect x="1372.00" y="352.00" width="12.0" height="44.80" fill="#a61120"/><rect x="1384.00" y="352.00" width="12.0" height="44.80" fill="#ff8809"/></g>
<line x1="1311.90" y1="396.8" x2="1311.90" y2="404.5" stroke="#666" stroke-width="1.4"/>
<text x="1310.50" y="420" text-anchor="middle" font-family="Liberation Sans" font-size="12" fill="#333">Collection Accounts Balance</text>
<g><rect x="1462.20" y="115.20" width="12.0" height="282.80" fill="none" stroke="rgb(200,200,200)" stroke-width="6" stroke-opacity="0.10"/><rect x="1461.90" y="114.90" width="12.0" height="282.80" fill="none" stroke="rgb(150,150,150)" stroke-width="4" stroke-opacity="0.10"/><rect x="1461.60" y="114.60" width="12.0" height="282.80" fill="none" stroke="rgb(100,100,100)" stroke-width="2" stroke-opacity="0.10"/><rect x="1475.20" y="118.20" width="12.0" height="279.80" fill="none" stroke="rgb(200,200,200)" stroke-width="6" stroke-opacity="0.10"/><rect x="1474.90" y="117.90" width="12.0" height="279.80" fill="none" stroke="rgb(150,150,150)" stroke-width="4" stroke-opacity="0.10"/><rect x="1474.60" y="117.60" width="12.0" height="279.80" fill="none" stroke="rgb(100,100,100)" stroke-width="2" stroke-opacity="0.10"/><rect x="1488.20" y="116.20" width="12.0" height="281.80" fill="none" stroke="rgb(200,200,200)" stroke-width="6" stroke-opacity="0.10"/><rect x="1487.90" y="115.90" width="12.0" height="281.80" fill="none" stroke="rgb(150,150,150)" stroke-width="4" stroke-opacity="0.10"/><rect x="1487.60" y="115.60" width="12.0" height="281.80" fill="none" stroke="rgb(100,100,100)" stroke-width="2" stroke-opacity="0.10"/><rect x="1501.20" y="112.20" width="12.0" height="285.80" fill="none" stroke="rgb(200,200,200)" stroke-width="6" stroke-opacity="0.10"/><rect x="1500.90" y="111.90" width="12.0" height="285.80" fill="none" stroke="rgb(150,150,150)" stroke-width="4" stroke-opacity="0.10"/><rect x="1500.60" y="111.60" width="12.0" height="285.80" fill="none" stroke="rgb(100,100,100)" stroke-width="2" stroke-opacity="0.10"/><rect x="1514.20" y="107.20" width="12.0" height="290.80" fill="none" stroke="rgb(200,200,200)" stroke-width="6" stroke-opacity="0.10"/><rect x="1513.90" y="106.90" width="12.0" height="290.80" fill="none" stroke="rgb(150,150,150)" stroke-width="4" stroke-opacity="0.10"/><rect x="1513.60" y="106.60" width="12.0" height="290.80" fill="none" stroke="rgb(100,100,100)" stroke-width="2" stroke-opacity="0.10"/><rect x="1527.20" y="104.20" width="12.0" height="293.80" fill="none" stroke="rgb(200,200,200)" stroke-width="6" stroke-opacity="0.10"/><rect x="1526.90" y="103.90" width="12.0" height="293.80" fill="none" stroke="rgb(150,150,150)" stroke-width="4" stroke-opacity="0.10"/><rect x="1526.60" y="103.60" width="12.0" height="293.80" fill="none" stroke="rgb(100,100,100)" stroke-width="2" stroke-opacity="0.10"/><rect x="1540.20" y="102.20" width="12.0" height="295.80" fill="none" stroke="rgb(200,200,200)" stroke-width="6" stroke-opacity="0.10"/><rect x="1539.90" y="101.90" width="12.0" height="295.80" fill="none" stroke="rgb(150,150,150)" stroke-width="4" stroke-opacity="0.10"/><rect x="1539.60" y="101.60" width="12.0" height="295.80" fill="none" stroke="rgb(100,100,100)" stroke-width="2" stroke-opacity="0.10"/><rect x="1553.20" y="102.20" width="12.0" height="295.80" fill="none" stroke="rgb(200,200,200)" stroke-width="6" stroke-opacity="0.10"/><rect x="1552.90" y="101.90" width="12.0" height="295.80" fill="none" stroke="rgb(150,150,150)" stroke-width="4" stroke-opacity="0.10"/><rect x="1552.60" y="101.60" width="12.0" height="295.80" fill="none" stroke="rgb(100,100,100)" stroke-width="2" stroke-opacity="0.10"/><rect x="1566.20" y="99.20" width="12.0" height="298.80" fill="none" stroke="rgb(200,200,200)" stroke-width="6" stroke-opacity="0.10"/><rect x="1565.90" y="98.90" width="12.0" height="298.80" fill="none" stroke="rgb(150,150,150)" stroke-width="4" stroke-opacity="0.10"/><rect x="1565.60" y="98.60" width="12.0" height="298.80" fill="none" stroke="rgb(100,100,100)" stroke-width="2" stroke-opacity="0.10"/><rect x="1579.20" y="90.20" width="12.0" height="307.80" fill="none" stroke="rgb(200,200,200)" stroke-width="6" stroke-opacity="0.10"/><rect x="1578.90" y="89.90" width="12.0" height="307.80" fill="none" stroke="rgb(150,150,150)" stroke-width="4" stroke-opacity="0.10"/><rect x="1578.60" y="89.60" width="12.0" height="307.80" fill="none" stroke="rgb(100,100,100)" stroke-width="2" stroke-opacity="0.10"/><rect x="1592.20" y="88.20" width="12.0" height="309.80" fill="none" stroke="rgb(200,200,200)" stroke-width="6" stroke-opacity="0.10"/><rect x="1591.90" y="87.90" width="12.0" height="309.80" fill="none" stroke="rgb(150,150,150)" stroke-width="4" stroke-opacity="0.10"/><rect x="1591.60" y="87.60" width="12.0" height="309.80" fill="none" stroke="rgb(100,100,100)" stroke-width="2" stroke-opacity="0.10"/><rect x="1605.20" y="87.20" width="12.0" height="310.80" fill="none" stroke="rgb(200,200,200)" stroke-width="6" stroke-opacity="0.10"/><rect x="1604.90" y="86.90" width="12.0" height="310.80" fill="none" stroke="rgb(150,150,150)" stroke-width="4" stroke-opacity="0.10"/><rect x="1604.60" y="86.60" width="12.0" height="310.80" fill="none" stroke="rgb(100,100,100)" stroke-width="2" stroke-opacity="0.10"/><rect x="1618.20" y="85.20" width="12.0" height="312.80" fill="none" stroke="rgb(200,200,200)" stroke-width="6" stroke-opacity="0.10"/><rect x="1617.90" y="84.90" width="12.0" height="312.80" fill="none" stroke="rgb(150,150,150)" stroke-width="4" stroke-opacity="0.10"/><rect x="1617.60" y="84.60" width="12.0" height="312.80" fill="none" stroke="rgb(100,100,100)" stroke-width="2" stroke-opacity="0.10"/></g>
<g><rect x="1461.00" y="114.00" width="12.0" height="282.80" fill="#94ae0a"/><rect x="1474.00" y="117.00" width="12.0" height="279.80" fill="#115fa6"/><rect x="1487.00" y="115.00" width="12.0" height="281.80" fill="#a61120"/><rect x="1500.00" y="111.00" width="12.0" height="285.80" fill="#ff8809"/><rect x="1513.00" y="106.00" width="12.0" height="290.80" fill="#ffd13e"/><rect x="1526.00" y="103.00" width="12.0" height="293.80" fill="#a61187"/><rect x="1539.00" y="101.00" width="12.0" height="295.80" fill="#24ad9a"/><rect x="1552.00" y="101.00" width="12.0" height="295.80" fill="#7c7474"/><rect x="1565.00" y="98.00" width="12.0" height="298.80" fill="#a66111"/><rect x="1578.00" y="89.00" width="12.0" height="307.80" fill="#94ae0a"/><rect x="1591.00" y="87.00" width="12.0" height="309.80" fill="#115fa6"/><rect x="1604.00" y="86.00" width="12.0" height="310.80" fill="#a61120"/><rect x="1617.00" y="84.00" width="12.0" height="312.80" fill="#ff8809"/></g>
<line x1="1544.60" y1="396.8" x2="1544.60" y2="404.5" stroke="#666" stroke-width="1.4"/>
<text x="1543.20" y="420" text-anchor="middle" font-family="Liberation Sans" font-size="12" fill="#333">Accounts Receivable</text>
<line x1="56.8" y1="74.5" x2="56.8" y2="397.55" stroke="#666" stroke-width="1.4"/>
<line x1="49" y1="396.8" x2="1641.5" y2="396.8" stroke="#666" stroke-width="1.4"/>
<rect x="1653.8" y="40" width="200" height="375.2" fill="#fff" stroke="#333" stroke-width="1.6"/>
<rect x="1660.2" y="62.45" width="14.8" height="14.6" fill="#94ae0a"/>
<text x="1684.4" y="73.45" font-family="Liberation Sans" font-size="14" fill="#111" letter-spacing="0.12">Apr 2020</text>
<rect x="1660.2" y="90.00" width="14.8" height="14.6" fill="#115fa6"/>
<text x="1684.4" y="101.00" font-family="Liberation Sans" font-size="14" fill="#111" letter-spacing="0.12">May 2020</text>
<rect x="1660.2" y="117.55" width="14.8" height="14.6" fill="#a61120"/>
<text x="1684.4" y="128.55" font-family="Liberation Sans" font-size="14" fill="#111" letter-spacing="0.12">Jun 2020</text>
<rect x="1660.2" y="145.10" width="14.8" height="14.6" fill="#ff8809"/>
<text x="1684.4" y="156.10" font-family="Liberation Sans" font-size="14" fill="#111" letter-spacing="0.12">Jul 2020</text>
<rect x="1660.2" y="172.65" width="14.8" height="14.6" fill="#ffd13e"/>
<text x="1684.4" y="183.65" font-family="Liberation Sans" font-size="14" fill="#111" letter-spacing="0.12">Aug 2020</text>
<rect x="1660.2" y="200.20" width="14.8" height="14.6" fill="#a61187"/>
<text x="1684.4" y="211.20" font-family="Liberation Sans" font-size="14" fill="#111" letter-spacing="0.12">Sep 2020</text>
<rect x="1660.2" y="227.75" width="14.8" height="14.6" fill="#24ad9a"/>
<text x="1684.4" y="238.75" font-family="Liberation Sans" font-size="14" fill="#111" letter-spacing="0.12">Oct 2020</text>
<rect x="1660.2" y="255.30" width="14.8" height="14.6" fill="#7c7474"/>
<text x="1684.4" y="266.30" font-family="Liberation Sans" font-size="14" fill="#111" letter-spacing="0.12">Nov 2020</text>
<rect x="1660.2" y="282.85" width="14.8" height="14.6" fill="#a66111"/>
<text x="1684.4" y="293.85" font-family="Liberation Sans" font-size="14" fill="#111" letter-spacing="0.12">Dec 2020</text>
<rect x="1660.2" y="310.40" width="14.8" height="14.6" fill="#94ae0a"/>
<text x="1684.4" y="321.40" font-family="Liberation Sans" font-size="14" fill="#111" letter-spacing="0.12">Jan 2021</text>
<rect x="1660.2" y="337.95" width="14.8" height="14.6" fill="#115fa6"/>
<text x="1684.4" y="348.95" font-family="Liberation Sans" font-size="14" fill="#111" letter-spacing="0.12">Feb 2021</text>
<rect x="1660.2" y="365.50" width="14.8" height="14.6" fill="#a61120"/>
<text x="1684.4" y="376.50" font-family="Liberation Sans" font-size="14" fill="#111" letter-spacing="0.12">Mar 2021</text>
<rect x="1660.2" y="393.05" width="14.8" height="14.6" fill="#ff8809"/>
<text x="1684.4" y="404.05" font-family="Liberation Sans" font-size="14" fill="#111" letter-spacing="0.12">Apr 2021</text>
</svg>
<div style="position:absolute;left:0;top:0;width:1748px;height:2px;background:#999"></div>
<div style="position:absolute;left:0;top:2px;width:1748px;height:1px;background:#fff"></div>
<div style="position:absolute;left:0;top:3px;width:1740px;height:30px;box-sizing:border-box;border-top:1px solid #99bbe8;border-bottom:1px solid #99bbe8;background:linear-gradient(#f3f7fb 0px,#f3f7fb 1px,#dae6f6 1px,#d0def2 13px,#abc6ec 13px,#b5cdee 15px,#c6d8f1 28px)"></div>
<div style="position:absolute;left:4px;top:3px;font-size:13px;font-weight:bold;color:#15428b;line-height:29px;transform:scaleY(1.08);transform-origin:0 19px">Analysis Graph</div>
<div style="position:absolute;left:0;top:33px;width:1740px;height:29px;background:linear-gradient(#dfe8f6,#d0def0)"></div>

<div class="lbl" style="left:21px;top:33px">As of Date:</div>
<div class="inp" style="left:148px;top:35px;width:76px;"><span class="t" style="position:absolute;left:3px;top:2px;line-height:17px">04/26/2021</span></div>
<div class="trig" style="left:223px;top:35px;width:21px;border-left:1px solid #b5b8c8"><svg width="16" height="16" viewBox="0 0 16 16" style="position:absolute;left:2px;top:4px">
<rect x="1" y="1" width="13" height="13" rx="1.5" fill="#e4e4e4" stroke="#7d9bca" stroke-width="1.2"/>
<rect x="1" y="1" width="13" height="2.2" fill="#7d9bca"/>
<rect x="3" y="5" width="2" height="2" fill="#fff"/><rect x="6.5" y="5" width="2" height="2" fill="#fff"/>
<rect x="3" y="8.5" width="2" height="2" fill="#fff"/><rect x="6.5" y="8.5" width="2" height="2" fill="#fff"/><rect x="10" y="8.5" width="2" height="2" fill="#fff"/>
<rect x="3" y="12" width="2" height="1.3" fill="#fff"/><rect x="6.5" y="12" width="2" height="1.3" fill="#fff"/><rect x="10" y="12" width="2" height="1.3" fill="#fff"/>
<circle cx="10.8" cy="6" r="2" fill="#fff" stroke="#b01c1c" stroke-width="1.4"/>
</svg></div>
<div class="lbl" style="left:268px;top:33px">Legal Entity:</div>
<div class="inp" style="left:394px;top:35px;width:158px;"><span class="t" style="position:absolute;left:4px;top:2px;line-height:17px">All Entities</span></div>
<div style="position:absolute;left:552px;top:35px;width:1px;height:24px;background:#e6edf7"></div>
<div class="trig" style="left:553px;top:35px;width:20px;border-left:1px solid #b5b8c8"><svg width="12" height="8" viewBox="0 0 12 8" style="position:absolute;left:2px;top:8px"><path d="M0.2 0.6 L3.6 0.6 L5.8 3.0 L8.0 0.6 L11.4 0.6 L5.8 6.6 Z" fill="#24498c"/></svg></div>
<div style="position:absolute;left:573px;top:35px;width:1px;height:24px;background:#f2f6fb"></div>
<div class="lbl" style="left:597px;top:33px">Provider:</div>
<div class="inp" style="left:722px;top:35px;width:159px;"><span class="t" style="position:absolute;left:3px;top:2px;line-height:17px">--All--</span></div>
<div class="trig" style="left:880px;top:35px;width:22px;border-left:1px solid #b5b8c8"><svg width="12" height="8" viewBox="0 0 12 8" style="position:absolute;left:3.5px;top:8px"><path d="M0.2 0.6 L3.6 0.6 L5.8 3.0 L8.0 0.6 L11.4 0.6 L5.8 6.6 Z" fill="#24498c"/></svg></div>
<div style="position:absolute;left:902px;top:35px;width:1px;height:24px;background:#f2f6fb"></div>

<div style="position:absolute;left:0;top:429px;width:1740px;height:3px;background:#99bbe8"></div>
<div class="gh" style="position:absolute;left:0;top:432px;width:1740px;height:27px"></div>
<div class="ht" style="left:4px;top:432px">Category</div>
<div style="position:absolute;left:264px;top:433px;width:1px;height:25px;background:#c8c8c8"></div>
<div class="ht" style="left:272px;top:432px">Apr 2020</div>
<div style="position:absolute;left:378px;top:433px;width:1px;height:25px;background:#c8c8c8"></div>
<div class="ht" style="left:386px;top:432px">May 2020</div>
<div style="position:absolute;left:492px;top:433px;width:1px;height:25px;background:#c8c8c8"></div>
<div class="ht" style="left:500px;top:432px">Jun 2020</div>
<div style="position:absolute;left:606px;top:433px;width:1px;height:25px;background:#c8c8c8"></div>
<div class="ht" style="left:614px;top:432px">Jul 2020</div>
<div style="position:absolute;left:720px;top:433px;width:1px;height:25px;background:#c8c8c8"></div>
<div class="ht" style="left:728px;top:432px">Aug 2020</div>
<div style="position:absolute;left:834px;top:433px;width:1px;height:25px;background:#c8c8c8"></div>
<div class="ht" style="left:842px;top:432px">Sep 2020</div>
<div style="position:absolute;left:948px;top:433px;width:1px;height:25px;background:#c8c8c8"></div>
<div class="ht" style="left:956px;top:432px">Oct 2020</div>
<div style="position:absolute;left:1062px;top:433px;width:1px;height:25px;background:#c8c8c8"></div>
<div class="ht" style="left:1070px;top:432px">Nov 2020</div>
<div style="position:absolute;left:1176px;top:433px;width:1px;height:25px;background:#c8c8c8"></div>
<div class="ht" style="left:1184px;top:432px">Dec 2020</div>
<div style="position:absolute;left:1290px;top:433px;width:1px;height:25px;background:#c8c8c8"></div>
<div class="ht" style="left:1298px;top:432px">Jan 2021</div>
<div style="position:absolute;left:1404px;top:433px;width:1px;height:25px;background:#c8c8c8"></div>
<div class="ht" style="left:1412px;top:432px">Feb 2021</div>
<div style="position:absolute;left:1518px;top:433px;width:1px;height:25px;background:#c8c8c8"></div>
<div class="ht" style="left:1526px;top:432px">Mar 2021</div>
<div style="position:absolute;left:1632px;top:433px;width:1px;height:25px;background:#c8c8c8"></div>
<div class="ht" style="left:1640px;top:432px">Apr 2021</div>
<div style="position:absolute;left:0;top:459px;width:1740px;height:24px;background:#dfe8f6;border-top:1px dotted #333;border-bottom:1px dotted #333"></div>
<div class="ct" style="left:3.5px;top:459px;letter-spacing:0.1px">New Charges</div>
<div class="ct" style="left:272px;top:459px">30964.24</div>
<div class="ct" style="left:386px;top:459px">3977.87</div>
<div class="ct" style="left:500px;top:459px">3764.08</div>
<div class="ct" style="left:614px;top:459px">13060.94</div>
<div class="ct" style="left:728px;top:459px">14580.9</div>
<div class="ct" style="left:842px;top:459px">9498.76</div>
<div class="ct" style="left:956px;top:459px">9315.26</div>
<div class="ct" style="left:1070px;top:459px">708.57</div>
<div class="ct" style="left:1184px;top:459px">10931.87</div>
<div class="ct" style="left:1298px;top:459px">25275.76</div>
<div class="ct" style="left:1412px;top:459px">22585.64</div>
<div class="ct" style="left:1526px;top:459px">3543.69</div>
<div class="ct" style="left:1640px;top:459px">4230.69</div>
<div style="position:absolute;left:0;top:485px;width:1740px;height:24px;background:#fafafa;border-bottom:1px solid #ededed"></div>
<div class="ct" style="left:3.5px;top:484px;letter-spacing:0.1px">Contractual Adjustments</div>
<div class="ct" style="left:272px;top:484px">8950.25</div>
<div class="ct" style="left:386px;top:484px">7501.69</div>
<div class="ct" style="left:500px;top:484px">153</div>
<div class="ct" style="left:614px;top:484px">417.8</div>
<div class="ct" style="left:728px;top:484px">213.38</div>
<div class="ct" style="left:842px;top:484px">1050.5</div>
<div class="ct" style="left:956px;top:484px">1297.4</div>
<div class="ct" style="left:1070px;top:484px">46.01</div>
<div class="ct" style="left:1184px;top:484px">1028.19</div>
<div class="ct" style="left:1298px;top:484px">0</div>
<div class="ct" style="left:1412px;top:484px">6469.88</div>
<div class="ct" style="left:1526px;top:484px">776.38</div>
<div class="ct" style="left:1640px;top:484px">56</div>
<div style="position:absolute;left:0;top:510px;width:1740px;height:24px;background:#ffffff;border-bottom:1px solid #ededed"></div>
<div class="ct" style="left:3.5px;top:509px;letter-spacing:0.1px">Payments</div>
<div class="ct" style="left:272px;top:509px">9641.3</div>
<div class="ct" style="left:386px;top:509px">2238.45</div>
<div class="ct" style="left:500px;top:509px">36.31</div>
<div class="ct" style="left:614px;top:509px">326.75</div>
<div class="ct" style="left:728px;top:509px">1377.91</div>
<div class="ct" style="left:842px;top:509px">799.89</div>
<div class="ct" style="left:956px;top:509px">2053.31</div>
<div class="ct" style="left:1070px;top:509px">0</div>
<div class="ct" style="left:1184px;top:509px">901.22</div>
<div class="ct" style="left:1298px;top:509px">0</div>
<div class="ct" style="left:1412px;top:509px">9711.34</div>
<div class="ct" style="left:1526px;top:509px">537.54</div>
<div class="ct" style="left:1640px;top:509px">88</div>
<div style="position:absolute;left:0;top:535px;width:1740px;height:24px;background:#fafafa;border-bottom:1px solid #ededed"></div>
<div class="ct" style="left:3.5px;top:534px;letter-spacing:0.1px">Insurance Balance</div>
<div class="ct" style="left:272px;top:534px">491891.95</div>
<div class="ct" style="left:386px;top:534px">485597.91</div>
<div class="ct" style="left:500px;top:534px">488334.95</div>
<div class="ct" style="left:614px;top:534px">495850.35</div>
<div class="ct" style="left:728px;top:534px">508456.27</div>
<div class="ct" style="left:842px;top:534px">514511.51</div>
<div class="ct" style="left:956px;top:534px">518377.57</div>
<div class="ct" style="left:1070px;top:534px">518940.13</div>
<div class="ct" style="left:1184px;top:534px">525809.67</div>
<div class="ct" style="left:1298px;top:534px">551085.43</div>
<div class="ct" style="left:1412px;top:534px">553625.46</div>
<div class="ct" style="left:1526px;top:534px">556003.69</div>
<div class="ct" style="left:1640px;top:534px">559756.99</div>
<div style="position:absolute;left:0;top:560px;width:1740px;height:24px;background:#ffffff;border-bottom:1px solid #ededed"></div>
<div class="ct" style="left:3.5px;top:559px;letter-spacing:0.1px">Patient Balance</div>
<div class="ct" style="left:272px;top:559px">172905.07</div>
<div class="ct" style="left:386px;top:559px">173436.84</div>
<div class="ct" style="left:500px;top:559px">174274.57</div>
<div class="ct" style="left:614px;top:559px">179075.56</div>
<div class="ct" style="left:728px;top:559px">179459.25</div>
<div class="ct" style="left:842px;top:559px">181052.38</div>
<div class="ct" style="left:956px;top:559px">183150.87</div>
<div class="ct" style="left:1070px;top:559px">183250.87</div>
<div class="ct" style="left:1184px;top:559px">185383.79</div>
<div class="ct" style="left:1298px;top:559px">185383.79</div>
<div class="ct" style="left:1412px;top:559px">189238.18</div>
<div class="ct" style="left:1526px;top:559px">189089.72</div>
<div class="ct" style="left:1640px;top:559px">189423.11</div>
<div style="position:absolute;left:0;top:585px;width:1740px;height:24px;background:#efefef;border-bottom:1px solid #dcdcdc"></div>
<div class="ct" style="left:3.5px;top:584px;letter-spacing:0.1px">Collection Accounts Balance</div>
<div class="ct" style="left:272px;top:584px">122183.79</div>
<div class="ct" style="left:386px;top:584px">122183.79</div>
<div class="ct" style="left:500px;top:584px">122183.79</div>
<div class="ct" style="left:614px;top:584px">122183.79</div>
<div class="ct" style="left:728px;top:584px">122183.79</div>
<div class="ct" style="left:842px;top:584px">122183.79</div>
<div class="ct" style="left:956px;top:584px">122183.79</div>
<div class="ct" style="left:1070px;top:584px">122183.79</div>
<div class="ct" style="left:1184px;top:584px">122183.79</div>
<div class="ct" style="left:1298px;top:584px">122183.79</div>
<div class="ct" style="left:1412px;top:584px">122193.79</div>
<div class="ct" style="left:1526px;top:584px">122193.79</div>
<div class="ct" style="left:1640px;top:584px">122193.79</div>
<div style="position:absolute;left:0;top:610px;width:1740px;height:24px;background:#ffffff;border-bottom:1px solid #ededed"></div>
<div class="ct" style="left:3.5px;top:609px;letter-spacing:0.1px">Accounts Receivable</div>
<div class="ct" style="left:272px;top:609px">786980.81</div>
<div class="ct" style="left:386px;top:609px">781218.54</div>
<div class="ct" style="left:500px;top:609px">784793.31</div>
<div class="ct" style="left:614px;top:609px">797109.7</div>
<div class="ct" style="left:728px;top:609px">810099.31</div>
<div class="ct" style="left:842px;top:609px">817747.68</div>
<div class="ct" style="left:956px;top:609px">823712.23</div>
<div class="ct" style="left:1070px;top:609px">824374.79</div>
<div class="ct" style="left:1184px;top:609px">833377.25</div>
<div class="ct" style="left:1298px;top:609px">858653.01</div>
<div class="ct" style="left:1412px;top:609px">865057.43</div>
<div class="ct" style="left:1526px;top:609px">867287.2</div>
<div class="ct" style="left:1640px;top:609px">871373.89</div>
<div style="position:absolute;left:0;top:634px;width:1740px;height:1px;background:#ededed"></div>
<div class="sc" style="left:0;top:637px;width:257px"><span class="t" style="position:absolute;left:10.5px;letter-spacing:0.1px">Change in New Charges</span></div>
<div class="sc" style="left:259px;top:637px;width:113px;text-align:center"><span class="t">-</span></div>
<div class="sc" style="left:374px;top:637px;width:113px;color:#ff0000"><span class="t" style="position:absolute;left:1.5px">-26986.37</span></div>
<div class="sc" style="left:489px;top:637px;width:113px;color:#ff0000"><span class="t" style="position:absolute;left:1.5px">-213.79</span></div>
<div class="sc" style="left:604px;top:637px;width:113px;color:#222"><span class="t" style="position:absolute;left:1.5px">9296.86</span></div>
<div class="sc" style="left:719px;top:637px;width:113px;color:#222"><span class="t" style="position:absolute;left:1.5px">1519.96</span></div>
<div class="sc" style="left:834px;top:637px;width:113px;color:#ff0000"><span class="t" style="position:absolute;left:1.5px">-5082.14</span></div>
<div class="sc" style="left:949px;top:637px;width:113px;color:#ff0000"><span class="t" style="position:absolute;left:1.5px">-183.50</span></div>
<div class="sc" style="left:1064px;top:637px;width:113px;color:#ff0000"><span class="t" style="position:absolute;left:1.5px">-8606.69</span></div>
<div class="sc" style="left:1179px;top:637px;width:113px;color:#222"><span class="t" style="position:absolute;left:1.5px">10223.30</span></div>
<div class="sc" style="left:1294px;top:637px;width:112px;color:#222"><span class="t" style="position:absolute;left:1.5px">14343.89</span></div>
<div class="sc" style="left:1408px;top:637px;width:112px;color:#ff0000"><span class="t" style="position:absolute;left:1.5px">-2690.12</span></div>
<div class="sc" style="left:1522px;top:637px;width:112px;color:#ff0000"><span class="t" style="position:absolute;left:1.5px">-19041.95</span></div>
<div class="sc" style="left:1636px;top:637px;width:104px;color:#222"><span class="t" style="position:absolute;left:1.5px">687.00</span></div>
<div class="sc" style="left:0;top:656px;width:257px"><span class="t" style="position:absolute;left:10.5px;letter-spacing:0.1px">% Change in New Charges</span></div>
<div class="sc" style="left:259px;top:656px;width:113px;text-align:center"><span class="t">-</span></div>
<div class="sc" style="left:374px;top:656px;width:113px;color:#ff0000"><span class="t" style="position:absolute;left:1.5px">-87.15%</span></div>
<div class="sc" style="left:489px;top:656px;width:113px;color:#ff0000"><span class="t" style="position:absolute;left:1.5px">-5.37%</span></div>
<div class="sc" style="left:604px;top:656px;width:113px;color:#222"><span class="t" style="position:absolute;left:1.5px">246.99%</span></div>
<div class="sc" style="left:719px;top:656px;width:113px;color:#222"><span class="t" style="position:absolute;left:1.5px">11.64%</span></div>
<div class="sc" style="left:834px;top:656px;width:113px;color:#ff0000"><span class="t" style="position:absolute;left:1.5px">-34.85%</span></div>
<div class="sc" style="left:949px;top:656px;width:113px;color:#ff0000"><span class="t" style="position:absolute;left:1.5px">-1.93%</span></div>
<div class="sc" style="left:1064px;top:656px;width:113px;color:#ff0000"><span class="t" style="position:absolute;left:1.5px">-92.39%</span></div>
<div class="sc" style="left:1179px;top:656px;width:113px;color:#222"><span class="t" style="position:absolute;left:1.5px">1442.81%</span></div>
<div class="sc" style="left:1294px;top:656px;width:112px;color:#222"><span class="t" style="position:absolute;left:1.5px">131.21%</span></div>
<div class="sc" style="left:1408px;top:656px;width:112px;color:#ff0000"><span class="t" style="position:absolute;left:1.5px">-10.64%</span></div>
<div class="sc" style="left:1522px;top:656px;width:112px;color:#ff0000"><span class="t" style="position:absolute;left:1.5px">-84.31%</span></div>
<div class="sc" style="left:1636px;top:656px;width:104px;color:#222"><span class="t" style="position:absolute;left:1.5px">19.39%</span></div>
<div class="sc" style="left:0;top:675px;width:257px"><span class="t" style="position:absolute;left:10.5px;letter-spacing:0.1px">Change in Contractual Adjustments</span></div>
<div class="sc" style="left:259px;top:675px;width:113px;text-align:center"><span class="t">-</span></div>
<div class="sc" style="left:374px;top:675px;width:113px;color:#ff0000"><span class="t" style="position:absolute;left:1.5px">-1448.56</span></div>
<div class="sc" style="left:489px;top:675px;width:113px;color:#ff0000"><span class="t" style="position:absolute;left:1.5px">-7348.69</span></div>
<div class="sc" style="left:604px;top:675px;width:113px;color:#222"><span class="t" style="position:absolute;left:1.5px">264.80</span></div>
<div class="sc" style="left:719px;top:675px;width:113px;color:#ff0000"><span class="t" style="position:absolute;left:1.5px">-204.42</span></div>
<div class="sc" style="left:834px;top:675px;width:113px;color:#222"><span class="t" style="position:absolute;left:1.5px">837.12</span></div>
<div class="sc" style="left:949px;top:675px;width:113px;color:#222"><span class="t" style="position:absolute;left:1.5px">246.90</span></div>
<div class="sc" style="left:1064px;top:675px;width:113px;color:#ff0000"><span class="t" style="position:absolute;left:1.5px">-1251.39</span></div>
<div class="sc" style="left:1179px;top:675px;width:113px;color:#222"><span class="t" style="position:absolute;left:1.5px">982.18</span></div>
<div class="sc" style="left:1294px;top:675px;width:112px;color:#ff0000"><span class="t" style="position:absolute;left:1.5px">-1028.19</span></div>
<div class="sc" style="left:1408px;top:675px;width:112px;color:#222"><span class="t" style="position:absolute;left:1.5px">6469.88</span></div>
<div class="sc" style="left:1522px;top:675px;width:112px;color:#ff0000"><span class="t" style="position:absolute;left:1.5px">-5693.50</span></div>
<div class="sc" style="left:1636px;top:675px;width:104px;color:#ff0000"><span class="t" style="position:absolute;left:1.5px">-720.38</span></div>
<div class="sc" style="left:0;top:694px;width:257px"><span class="t" style="position:absolute;left:10.5px;letter-spacing:0.1px">% Change in Contractual Adjustments</span></div>
<div class="sc" style="left:259px;top:694px;width:113px;text-align:center"><span class="t">-</span></div>
<div class="sc" style="left:374px;top:694px;width:113px;color:#ff0000"><span class="t" style="position:absolute;left:1.5px">-16.18%</span></div>
<div class="sc" style="left:489px;top:694px;width:113px;color:#ff0000"><span class="t" style="position:absolute;left:1.5px">-97.96%</span></div>
<div class="sc" style="left:604px;top:694px;width:113px;color:#222"><span class="t" style="position:absolute;left:1.5px">173.07%</span></div>
<div class="sc" style="left:719px;top:694px;width:113px;color:#ff0000"><span class="t" style="position:absolute;left:1.5px">-48.93%</span></div>
<div class="sc" style="left:834px;top:694px;width:113px;color:#222"><span class="t" style="position:absolute;left:1.5px">392.31%</span></div>
<div class="sc" style="left:949px;top:694px;width:113px;color:#222"><span class="t" style="position:absolute;left:1.5px">23.50%</span></div>
<div class="sc" style="left:1064px;top:694px;width:113px;color:#ff0000"><span class="t" style="position:absolute;left:1.5px">-96.45%</span></div>
<div class="sc" style="left:1179px;top:694px;width:113px;color:#222"><span class="t" style="position:absolute;left:1.5px">2134.71%</span></div>
<div class="sc" style="left:1294px;top:694px;width:112px;color:#ff0000"><span class="t" style="position:absolute;left:1.5px">-100.00%</span></div>
<div class="sc" style="left:1408px;top:694px;width:112px;color:#222"><span class="t" style="position:absolute;left:1.5px">0.00%</span></div>
<div class="sc" style="left:1522px;top:694px;width:112px;color:#ff0000"><span class="t" style="position:absolute;left:1.5px">-88.00%</span></div>
<div class="sc" style="left:1636px;top:694px;width:104px;color:#ff0000"><span class="t" style="position:absolute;left:1.5px">-92.79%</span></div>
<div class="sc" style="left:0;top:713px;width:257px"><span class="t" style="position:absolute;left:10.5px;letter-spacing:0.1px">Change in Payments</span></div>
<div class="sc" style="left:259px;top:713px;width:113px;text-align:center"><span class="t">-</span></div>
<div class="sc" style="left:374px;top:713px;width:113px;color:#ff0000"><span class="t" style="position:absolute;left:1.5px">-7402.85</span></div>
<div class="sc" style="left:489px;top:713px;width:113px;color:#ff0000"><span class="t" style="position:absolute;left:1.5px">-2202.14</span></div>
<div class="sc" style="left:604px;top:713px;width:113px;color:#222"><span class="t" style="position:absolute;left:1.5px">290.44</span></div>
<div class="sc" style="left:719px;top:713px;width:113px;color:#222"><span class="t" style="position:absolute;left:1.5px">1051.16</span></div>
<div class="sc" style="left:834px;top:713px;width:113px;color:#ff0000"><span class="t" style="position:absolute;left:1.5px">-578.02</span></div>
<div class="sc" style="left:949px;top:713px;width:113px;color:#222"><span class="t" style="position:absolute;left:1.5px">1253.42</span></div>
<div class="sc" style="left:1064px;top:713px;width:113px;color:#ff0000"><span class="t" style="position:absolute;left:1.5px">-2053.31</span></div>
<div class="sc" style="left:1179px;top:713px;width:113px;color:#222"><span class="t" style="position:absolute;left:1.5px">901.22</span></div>
<div class="sc" style="left:1294px;top:713px;width:112px;color:#ff0000"><span class="t" style="position:absolute;left:1.5px">-901.22</span></div>
<div class="sc" style="left:1408px;top:713px;width:112px;color:#222"><span class="t" style="position:absolute;left:1.5px">9711.34</span></div>
<div class="sc" style="left:1522px;top:713px;width:112px;color:#ff0000"><span class="t" style="position:absolute;left:1.5px">-9173.80</span></div>
<div class="sc" style="left:1636px;top:713px;width:104px;color:#ff0000"><span class="t" style="position:absolute;left:1.5px">-449.54</span></div>
<div style="position:absolute;left:1740px;top:3px;width:8px;height:737px;background:#f0f0f0"></div>
<div style="position:absolute;left:0;top:732px;width:1740px;height:8px;background:#f0f0f0"></div>
<div style="position:absolute;left:21px;top:734px;width:1693px;height:6px;background:#c1c1c1"></div>
<div style="position:absolute;left:1728px;top:738px;width:2px;height:2px;background:#505050"></div>
<div style="position:absolute;left:1747px;top:738px;width:1px;height:1px;background:#777"></div>
<div style="position:absolute;left:1747px;top:18px;width:1px;height:1px;background:#777"></div>
<div style="position:absolute;left:9px;top:739px;width:2px;height:1px;background:#505050"></div>
</body></html>
